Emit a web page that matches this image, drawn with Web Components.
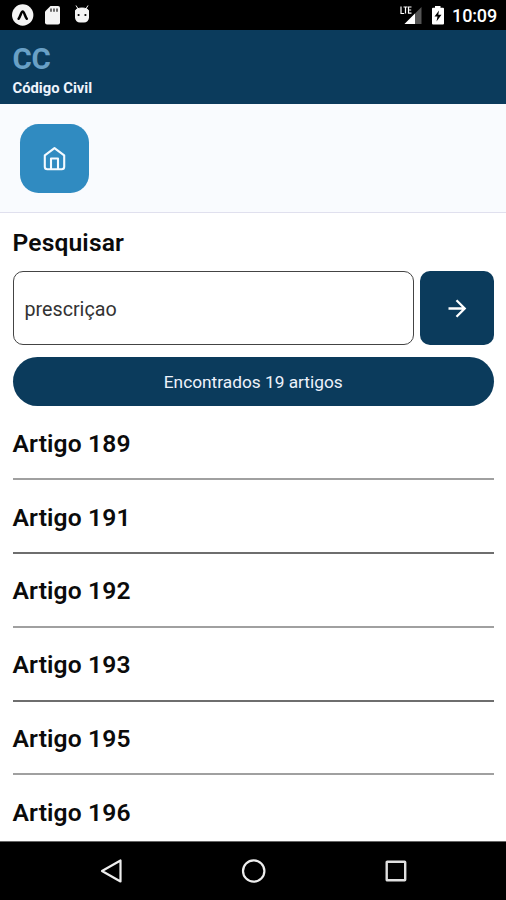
<!DOCTYPE html>
<html lang="pt-BR">
<head>
<meta charset="utf-8">
<title>Código Civil</title>
<style>
html,body{margin:0;height:100%;overflow:hidden;background:#fff}
body{font-family:Roboto,"Liberation Sans",sans-serif}
</style>
</head>
<body>
<civil-app></civil-app>
<script>
const define=(name,html)=>{
  const t=document.createElement('template');
  t.innerHTML=html;
  customElements.define(name,class extends HTMLElement{
    constructor(){super();this.attachShadow({mode:'open'}).append(t.content.cloneNode(true));}
  });
};

define('status-bar',`<style>
:host{display:flex;height:30px;background:#000;color:#fff;flex:none;box-sizing:border-box;padding:0 9px 0 12px;justify-content:space-between;align-items:center}
div{display:flex;align-items:center}
svg{display:block}
span{font-size:18px;font-weight:500;line-height:30px;padding-top:2px;letter-spacing:-.15px}
</style>
<div><svg width="82" height="30" viewBox="12 0 82 30">
<circle cx="22.7" cy="15" r="10.7" fill="#f4f4f4"/>
<path d="M18.6 18.800C20.500 16.4 21.2 11.500 22.7 11.500s2.200 4.900 4.100 7.300" fill="none" stroke="#000" stroke-width="2.500" stroke-linecap="round"/>
<path d="M50.5 6H58a2 2 0 0 1 2 2v14.500a2 2 0 0 1-2 2H47a2 2 0 0 1-2-2V11.500z" fill="#f4f4f4"/>
<path d="M51 8.500v3.200M54 8.500v3.200M57 8.500v3.200" stroke="#222" stroke-width="1.300"/>
<path d="M75 11h14v6.800a5 5 0 0 1-5 4.700h-4a5 5 0 0 1-5-4.700z" fill="#f4f4f4"/>
<path d="M75.500 11c0-4 13-4 13 0zM76 5.500l2.500 4M88 5.500l-2.500 4" stroke="#f4f4f4" fill="#f4f4f4"/>
<circle cx="78.600" cy="15" r="1.100" fill="#000"/><circle cx="85.400" cy="15" r="1.100" fill="#000"/>
</svg></div>
<div><svg width="53" height="30" viewBox="400 0 53 30">
<path d="M405.500 24L422.500 7v17z" fill="#555"/><path d="M405.500 24L416 13.500V24z" fill="#fff"/>
<path d="M402 6.500v7h3.200M404.500 7h4M406.500 7v6.500M412.500 7h-3v6.200h3M409.500 10h2.700" fill="none" stroke="#fff" stroke-width="1.200"/>
<path d="M436 6h5.500v1.700h2.500a1 1 0 0 1 1 1V23.500a1 1 0 0 1-1 1h-10a1 1 0 0 1-1-1V8.700a1 1 0 0 1 1-1h2z" fill="#fff"/>
<path d="M440 10.500l-4.500 6h3l-1 5 5-6.700h-3.200z" fill="#000"/>
</svg><span>10:09</span></div>`);

define('app-header',`<style>
:host{display:block;flex:none;height:74px;box-sizing:border-box;background:#0b3b5c;padding:11.500px 12.500px 0}
h1{margin:0;font-size:29.500px;line-height:34px;font-weight:700;letter-spacing:-.3px;color:#69a0c6}
p{margin:3px 0 0;font-size:14.800px;line-height:18px;font-weight:700;color:#eef4fc}
</style><h1><slot name="title"></slot></h1><p><slot></slot></p>`);

define('home-bar',`<style>
:host{display:block;flex:none;height:109px;box-sizing:border-box;background:#f9fbfe;border-bottom:1px solid #e0e0ee;padding:20px}
button{display:grid;place-items:center;width:69px;height:69px;border:0;border-radius:18.500px;background:#308bc1;padding:0}
</style><button aria-label="Início"><svg width="25" height="25" viewBox="0 0 25 25" fill="none" stroke="#f4faff" stroke-width="2.100" stroke-linejoin="round" stroke-linecap="round"><path d="M2.800 9.400L12.500 2.200l9.700 7.200v11.300a2.500 2.500 0 0 1-2.500 2.500H5.300a2.500 2.500 0 0 1-2.500-2.500zM9 22.500V12.500h7v10"/></svg></button>`);

define('search-form',`<style>
:host{display:block;flex:none;padding:14px 12px 0 12.500px}
h2{margin:0;font-size:24.600px;line-height:31px;font-weight:600;letter-spacing:.15px;color:#0b0b0b}
.row{display:flex;gap:6px;margin-top:13px}
.field{flex:1;box-sizing:border-box;height:74px;border:1.200px solid #444;border-radius:10px;padding:2px 11px 0;font-size:19.700px;line-height:72px;color:#333;background:#fff}
button{width:74px;height:74px;border:0;border-radius:10px;background:#0b3b5c;display:grid;place-items:center;padding:0}
</style><h2><slot name="label"></slot></h2><div class="row"><div class="field"><slot></slot></div><button aria-label="Buscar"><svg width="24" height="24" viewBox="0 0 24 24" fill="none" stroke="#fff" stroke-width="2.300"><path d="M3.500 12.500h16M11.500 4.300l8.200 8.200-8.200 8.200"/></svg></button></div>`);

define('result-count',`<style>
:host{display:block;flex:none;margin:12px 12px 0 12.500px;height:49px;border-radius:24.500px;background:#0b3b5c;color:#edf2fb;text-align:center;font-size:17.300px;line-height:50px}
</style><slot></slot>`);

define('article-row',`<style>
:host{display:block;height:73.850px;box-sizing:border-box;margin:0 12px 0 12.500px;font-size:24.600px;line-height:30px;font-weight:600;letter-spacing:.15px;color:#0b0b0b;padding-top:22.800px}
:host::after{content:"";display:block;height:2px;background:var(--rule,#a0a0a0);margin-top:19.200px}
</style><slot></slot>`);

define('nav-bar',`<style>
:host{display:flex;flex:none;height:59px;box-sizing:border-box;background:#000;border-top:1px solid #666;justify-content:space-between;align-items:center;padding:0 98px 0 100px}
svg{display:block}
</style>
<svg width="24" height="26" viewBox="0 0 24 26" fill="none" stroke="#eee" stroke-width="2.200" stroke-linejoin="round"><path d="M2 13L20.500 2.500v21z"/></svg>
<svg width="26" height="26" viewBox="0 0 26 26" fill="none" stroke="#eee" stroke-width="2.200"><circle cx="12.700" cy="13" r="10.700"/></svg>
<svg width="24" height="26" viewBox="0 0 24 26" fill="none" stroke="#e0e0e0" stroke-width="2.400"><rect x="2.700" y="3.700" width="18.500" height="18.500" rx=".5"/></svg>`);

define('civil-app',`<style>
:host{display:flex;flex-direction:column;width:506px;height:900px;background:#fff}
main{flex:1;min-height:0;overflow:hidden}
</style>
<status-bar></status-bar>
<app-header><span slot="title">CC</span>Código Civil</app-header>
<home-bar></home-bar>
<search-form><span slot="label">Pesquisar</span>prescriçao</search-form>
<result-count>Encontrados 19 artigos</result-count>
<main>
<article-row>Artigo 189</article-row>
<article-row style="--rule:#6e6e6e">Artigo 191</article-row>
<article-row>Artigo 192</article-row>
<article-row style="--rule:#6e6e6e">Artigo 193</article-row>
<article-row>Artigo 195</article-row>
<article-row>Artigo 196</article-row>
</main>
<nav-bar></nav-bar>`);
</script>
</body>
</html>
